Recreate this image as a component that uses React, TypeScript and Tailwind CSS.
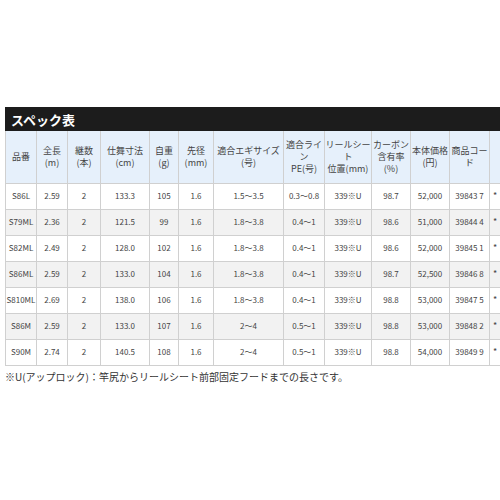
const cols = [31, 31, 33, 49, 29, 35, 70, 41, 47, 39, 39, 40, 30];

const headers: string[][] = [
  ["品番"],
  ["全長", "(m)"],
  ["継数", "(本)"],
  ["仕舞寸法", "(cm)"],
  ["自重", "(g)"],
  ["先径", "(mm)"],
  ["適合エギサイズ", "(号)"],
  ["適合ライ", "ン", "PE(号)"],
  ["リールシー", "ト", "位置(mm)"],
  ["カーボン", "含有率", "(%)"],
  ["本体価格", "(円)"],
  ["商品コー", "ド"],
  [""],
];

const rows = [
  ["S86L", "2.59", "2", "133.3", "105", "1.6", "1.5〜3.5", "0.3〜0.8", "339※U", "98.7", "52,000", "39843 7", "*"],
  ["S79ML", "2.36", "2", "121.5", "99", "1.6", "1.8〜3.8", "0.4〜1", "339※U", "98.6", "51,000", "39844 4", "*"],
  ["S82ML", "2.49", "2", "128.0", "102", "1.6", "1.8〜3.8", "0.4〜1", "339※U", "98.6", "52,000", "39845 1", "*"],
  ["S86ML", "2.59", "2", "133.0", "104", "1.6", "1.8〜3.8", "0.4〜1", "339※U", "98.7", "52,500", "39846 8", "*"],
  ["S810ML", "2.69", "2", "138.0", "106", "1.6", "1.8〜3.8", "0.4〜1", "339※U", "98.8", "53,000", "39847 5", "*"],
  ["S86M", "2.59", "2", "133.0", "107", "1.6", "2〜4", "0.5〜1", "339※U", "98.8", "53,000", "39848 2", "*"],
  ["S90M", "2.74", "2", "140.5", "108", "1.6", "2〜4", "0.5〜1", "339※U", "98.8", "54,000", "39849 9", "*"],
];

export default function App() {
  return (
    <div
      className="w-[500px] h-[500px] overflow-hidden bg-white text-[#444]"
      style={{ fontFamily: '"Noto Sans CJK JP", "Noto Sans", sans-serif' }}
    >
      <div className="pt-[107px] pl-[5px]">
        <div className="h-[24px] bg-[#1c1c1c] flex items-center pl-[6px] w-[495px]">
          <span className="text-white text-[13px] font-bold leading-none">スペック表</span>
        </div>
        <table className="table-fixed border-collapse w-[514px]">
          <colgroup>
            {cols.map((w, i) => (
              <col key={i} style={{ width: w }} />
            ))}
          </colgroup>
          <thead>
            <tr className="h-[52px] bg-[#e6f0fb]">
              {headers.map((h, i) => (
                <th
                  key={i}
                  className="border border-[#d0d0d0] border-t-0 font-normal text-[9px] leading-[12px] text-center p-0 text-[#444] whitespace-nowrap"
                >
                  {h.map((line, j) => (
                    <div key={j}>{line}</div>
                  ))}
                </th>
              ))}
            </tr>
          </thead>
          <tbody>
            {rows.map((r, i) => (
              <tr key={i} className={i % 2 === 1 ? "h-[26px] bg-[#f2f2f2]" : "h-[26px] bg-white"}>
                {r.map((c, j) => (
                  <td
                    key={j}
                    className={
                      j === 12
                        ? "border border-[#d0d0d0] text-[9px] text-left pl-[3px] p-0 whitespace-nowrap"
                        : "border border-[#d0d0d0] text-[8px] text-center p-0 whitespace-nowrap"
                    }
                  >
                    {c}
                  </td>
                ))}
              </tr>
            ))}
          </tbody>
        </table>
        <p className="text-[10px] leading-none mt-[6px] text-[#333]">
          ※U(アップロック)：竿尻からリールシート前部固定フードまでの長さです。
        </p>
      </div>
    </div>
  );
}
